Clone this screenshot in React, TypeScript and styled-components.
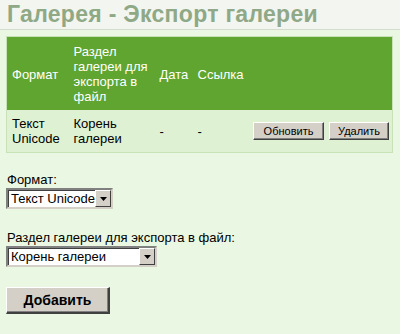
import styled, { createGlobalStyle } from "styled-components";

const GlobalStyle = createGlobalStyle`
  html, body {
    margin: 0;
    padding: 0;
    background: #eaf7e2;
    font-family: "Liberation Sans", Arial, sans-serif;
  }
`;

const rows = [
  { format: ["Текст", "Unicode"], section: ["Корень", "галереи"], date: "-", link: "-" },
];

const App = () => {
  return (
    <>
      <GlobalStyle />
      <Page>
        <TitleBar>
          <Title>Галерея - Экспорт галереи</Title>
        </TitleBar>
        <Content>
          <Table>
            <colgroup>
              <col style={{ width: 62 }} />
              <col style={{ width: 86 }} />
              <col style={{ width: 38 }} />
              <col style={{ width: 55 }} />
              <col />
            </colgroup>
            <thead>
              <tr>
                <Th>Формат</Th>
                <Th>Раздел галереи для экспорта в файл</Th>
                <Th>Дата</Th>
                <Th>Ссылка</Th>
                <Th />
              </tr>
            </thead>
            <tbody>
              {rows.map((r) => (
                <tr key={r.format.join(" ")}>
                  <Td>
                    {r.format[0]}
                    <br />
                    {r.format[1]}
                  </Td>
                  <Td>
                    {r.section[0]}
                    <br />
                    {r.section[1]}
                  </Td>
                  <Td>{r.date}</Td>
                  <Td>{r.link}</Td>
                  <ActionCell>
                    <Actions>
                      <SmallButton $width={71}>Обновить</SmallButton>
                      <SmallButton $width={60}>Удалить</SmallButton>
                    </Actions>
                  </ActionCell>
                </tr>
              ))}
            </tbody>
          </Table>

          <Field>
            <Label>Формат:</Label>
            <Select $width={107}>
              <SelectValue>Текст Unicode</SelectValue>
              <Arrow>
                <svg width="7" height="4" viewBox="0 0 7 4">
                  <path d="M0 0h7L3.5 4z" fill="#000" />
                </svg>
              </Arrow>
            </Select>
          </Field>

          <Field>
            <Label>Раздел галереи для экспорта в файл:</Label>
            <Select $width={151}>
              <SelectValue>Корень галереи</SelectValue>
              <Arrow>
                <svg width="7" height="4" viewBox="0 0 7 4">
                  <path d="M0 0h7L3.5 4z" fill="#000" />
                </svg>
              </Arrow>
            </Select>
          </Field>

          <AddButton>Добавить</AddButton>
        </Content>
      </Page>
    </>
  );
};

export default App;

const Page = styled.div`
  width: 400px;
  min-height: 334px;
  background: #eaf7e2;
`;

const TitleBar = styled.div`
  background: #f2f5f0;
  border-bottom: 1px solid #d3dccd;
  height: 29px;
  padding: 0 7px;
  display: flex;
  align-items: center;
`;

const Title = styled.h1`
  margin: 0;
  font-size: 23px;
  font-weight: bold;
  color: #8fa886;
  letter-spacing: 0.3px;
`;

const Content = styled.div`
  padding: 6px 7px 0 6px;
`;

const Table = styled.table`
  width: 100%;
  table-layout: fixed;
  border-collapse: collapse;
  border: 1px solid #c8e2b8;
  background: #dff1d3;
  font-size: 13px;
  line-height: 15px;
`;

const Th = styled.th`
  background: #5fa530;
  color: #ffffff;
  font-weight: normal;
  text-align: left;
  padding: 7px 5px 6px;
  vertical-align: middle;
`;

const Td = styled.td`
  color: #000;
  padding: 6px 5px 6px;
  vertical-align: middle;
`;

const ActionCell = styled(Td)`
  padding-right: 3px;
`;

const Actions = styled.div`
  display: flex;
  justify-content: flex-end;
  gap: 5px;
`;

const buttonFace = `
  background: #d4d0c8;
  border-style: solid;
  border-color: #ffffff #404040 #404040 #ffffff;
  box-shadow: inset -1px -1px 0 #808080;
  color: #000;
  font-family: "Liberation Sans", Arial, sans-serif;
  cursor: pointer;
`;

const SmallButton = styled.button<{ $width: number }>`
  ${buttonFace}
  border-width: 1px;
  width: ${(p) => p.$width}px;
  height: 18px;
  padding: 0;
  font-size: 11px;
  line-height: 14px;
`;

const Field = styled.div`
  margin-top: 19px;
  display: flex;
  flex-direction: column;
  align-items: flex-start;

  & + & {
    margin-top: 21px;
  }
`;

const Label = styled.label`
  font-size: 13px;
  line-height: 15px;
  color: #000;
  margin-left: 1px;
`;

const Select = styled.div<{ $width: number }>`
  width: ${(p) => p.$width}px;
  height: 21px;
  margin-top: 1px;
  box-sizing: border-box;
  display: flex;
  align-items: stretch;
  background: #fff;
  border-style: solid;
  border-width: 2px;
  border-color: #808080 #d4d0c8 #d4d0c8 #808080;
  box-shadow: inset 1px 1px 0 #404040;
`;

const SelectValue = styled.span`
  flex: 1;
  font-size: 13px;
  line-height: 17px;
  padding-left: 3px;
  color: #000;
  white-space: nowrap;
  overflow: hidden;
`;

const Arrow = styled.span`
  width: 16px;
  box-sizing: border-box;
  background: #d4d0c8;
  border-style: solid;
  border-width: 1px;
  border-color: #ffffff #404040 #404040 #ffffff;
  display: flex;
  align-items: center;
  justify-content: center;
`;

const AddButton = styled.button`
  ${buttonFace}
  border-width: 1px 2px 2px 1px;
  margin-top: 20px;
  width: 104px;
  height: 27px;
  font-size: 14px;
  font-weight: bold;
  padding: 0;
`;
